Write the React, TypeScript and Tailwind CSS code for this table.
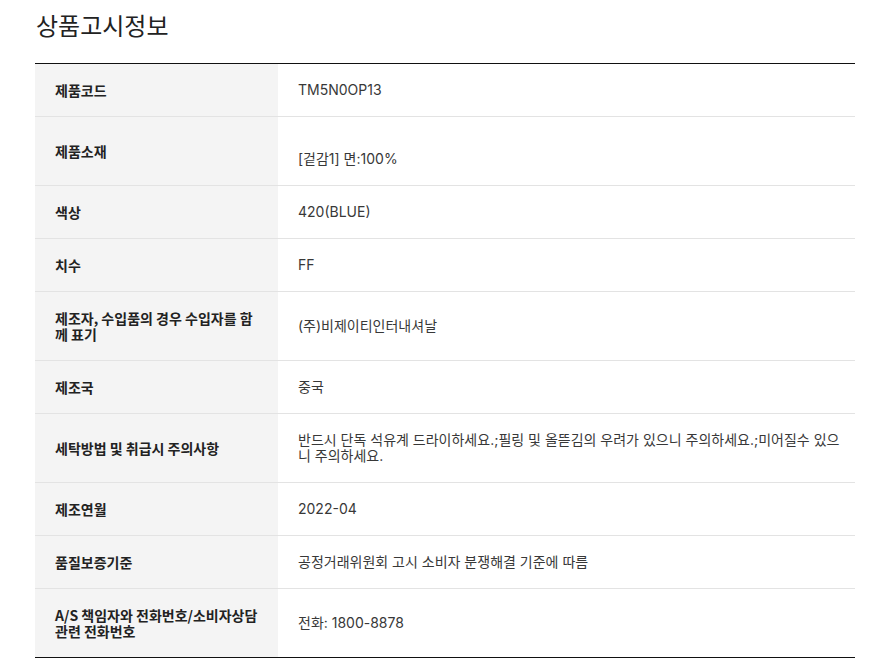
const rows: { label: string; value: React.ReactNode }[] = [
  { label: "제품코드", value: "TM5N0OP13" },
  {
    label: "제품소재",
    value: (
      <>
        <br />
        [겉감1] 면:100%
      </>
    ),
  },
  { label: "색상", value: "420(BLUE)" },
  { label: "치수", value: "FF" },
  { label: "제조자, 수입품의 경우 수입자를 함께 표기", value: "(주)비제이티인터내셔날" },
  { label: "제조국", value: "중국" },
  {
    label: "세탁방법 및 취급시 주의사항",
    value: "반드시 단독 석유계 드라이하세요.;필링 및 올뜯김의 우려가 있으니 주의하세요.;미어질수 있으니 주의하세요.",
  },
  { label: "제조연월", value: "2022-04" },
  { label: "품질보증기준", value: "공정거래위원회 고시 소비자 분쟁해결 기준에 따름" },
  { label: "A/S 책임자와 전화번호/소비자상담 관련 전화번호", value: "전화: 1800-8878" },
];

export default function App() {
  return (
    <div className="min-h-screen bg-white px-[35px] pt-[7px] font-['Inter','Noto_Sans_CJK_KR',sans-serif]">
      <h2 className="mb-[20px] pl-px text-[24px] leading-[36px] font-normal text-[#222] font-['Noto_Sans_CJK_KR',sans-serif]">
        상품고시정보
      </h2>
      <div className="w-[820px] border-t border-b border-[#111]">
        {rows.map((row, i) => (
          <div
            key={row.label}
            className={`flex ${i < rows.length - 1 ? "border-b border-[#e3e3e3]" : ""}`}
          >
            <div className="flex w-[243px] shrink-0 items-center bg-[#f4f4f4] py-[18px] pl-[20px] pr-[14px] text-[14px] leading-4 font-bold text-[#222] font-['Noto_Sans_CJK_KR',sans-serif]">
              {row.label}
            </div>
            <div className="flex flex-1 items-center py-[18px] pl-[20px] pr-[8px] text-[14px] leading-4 text-[#383838]">
              <span>{row.value}</span>
            </div>
          </div>
        ))}
      </div>
    </div>
  );
}
